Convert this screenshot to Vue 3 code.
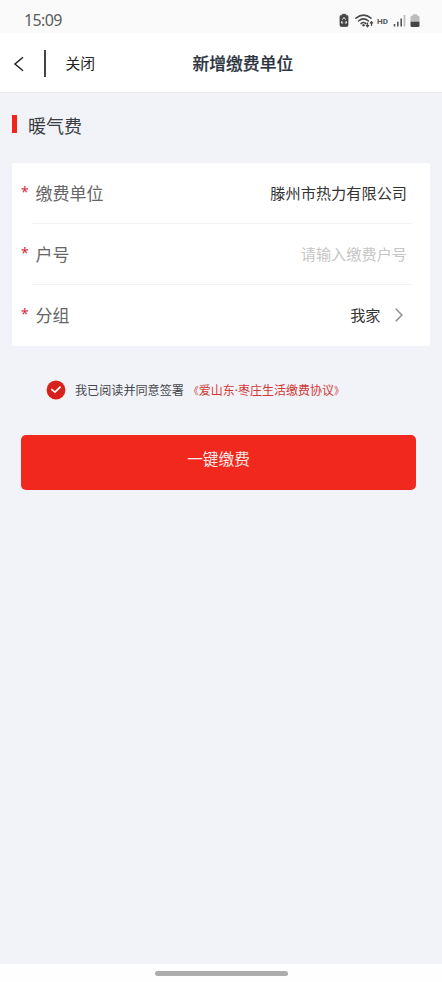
<script setup>
const rows = [
  { label: '缴费单位', value: '滕州市热力有限公司' },
  { label: '户号', placeholder: '请输入缴费户号' },
  { label: '分组', value: '我家', arrow: true },
]
</script>

<template>
  <div class="page">
    <div class="status">
      <span class="time">15:09</span>
      <svg class="status-icons" width="84" height="18" viewBox="0 0 84 18">
        <path d="M3.500 3.200h1V2.300h3v.9h1q1.500 0 1.500 1.500v8.300q0 1.500-1.500 1.500h-5q-1.500 0-1.500-1.500V4.700q0-1.500 1.500-1.500z" fill="#454545" stroke="#454545" stroke-width=".8" />
        <path d="M4.500 7.600 6 5.400l1.500 2.200M8 9l.6 2H6.800M5.200 11H3.400L4 9" fill="none" stroke="#eee" stroke-width="1" />
        <g fill="none" stroke="#4a4a4a" stroke-width="1.500" stroke-linecap="round">
          <path d="M18 6.200q7.500-6.200 15 0M20.500 9q5-4.200 10 0M23 11.600q2.500-2 5 0" />
        </g>
        <circle cx="25.500" cy="13.300" r="1.200" fill="#4a4a4a" />
        <path d="M29.500 10.500v4M28 13.200l1.500 1.600 1.500-1.600M33.500 14v-4M32 11.300l1.500-1.600 1.500 1.600" fill="none" stroke="#4a4a4a" stroke-width="1.200" />
        <text x="39" y="11.800" class="hd">HD</text>
        <path d="M56.500 12V14.500M59.800 9.800V14.500M63.200 6.500V14.500" stroke="#555" stroke-width="1.600" />
        <path d="M66.500 3V14.500" stroke="#bdbdbd" stroke-width="1.700" />
        <path d="M75 2.200h4v1.300h1q1.500 0 1.500 1.500v5h-9V5q0-1.500 1.500-1.500h1z" fill="#bdbdbd" />
        <path d="M72.500 9.700h9v3.800q0 1.500-1.500 1.500h-6q-1.500 0-1.500-1.500z" fill="#454545" />
      </svg>
    </div>
    <header class="nav">
      <svg class="back" width="12" height="18" viewBox="0 0 12 18">
        <path d="M10 2.200 2 9l8 6.800" fill="none" stroke="#222" stroke-width="1.500" />
      </svg>
      <i class="bar"></i>
      <span class="close">关闭</span>
      <h1>新增缴费单位</h1>
    </header>
    <main>
      <h2><i></i><span>暖气费</span></h2>
      <section class="card">
        <div v-for="row in rows" :key="row.label" class="row">
          <span class="star">*</span>
          <span class="label">{{ row.label }}</span>
          <span v-if="row.placeholder" class="value placeholder">{{ row.placeholder }}</span>
          <span v-else class="value">{{ row.value }}</span>
          <svg v-if="row.arrow" class="arrow" width="10" height="16" viewBox="0 0 10 16">
            <path d="M1.700 1.800 8 8l-6.300 6.200" fill="none" stroke="#8c8c8c" stroke-width="1.400" />
          </svg>
        </div>
      </section>
      <div class="agree">
        <svg width="20" height="20" viewBox="0 0 20 20">
          <circle cx="10" cy="10" r="9.400" fill="#d9211b" />
          <path d="M5.300 9.200 9 12.200l5.600-5.500" fill="none" stroke="#fff" stroke-width="1.700" />
        </svg>
        <span class="text">我已阅读并同意签署</span>
        <span class="link"><span class="mark open">《</span>爱山东·枣庄生活缴费协议<span class="mark">》</span></span>
      </div>
      <button class="pay">一键缴费</button>
    </main>
    <footer><i></i></footer>
  </div>
</template>

<style>
body {
  margin: 0;
}
</style>

<style scoped>
.page {
  width: 442px;
  height: 982px;
  display: flex;
  flex-direction: column;
  overflow: hidden;
  background: #f2f3f8;
  font-family: "Noto Sans", "Noto Sans CJK SC", sans-serif;
}
.status {
  height: 33px;
  flex: none;
  box-sizing: border-box;
  padding: 0 20px 0 24px;
  display: flex;
  justify-content: space-between;
  background: #fafafa;
}
.time {
  font-size: 16px;
  line-height: 41px;
  letter-spacing: -0.6px;
  color: #5c5c5c;
}
.status-icons {
  margin-top: 12px;
}
.hd {
  font: bold 8px Roboto, sans-serif;
  fill: #555;
}
.nav {
  height: 60px;
  flex: none;
  box-sizing: border-box;
  display: flex;
  align-items: center;
  padding: 1px 0 0 12.500px;
  background: #fff;
  border-bottom: 1px solid #ececef;
}
.bar {
  width: 1.500px;
  height: 27px;
  margin: 1px 20px 0 19.500px;
  background: #444;
}
.back {
  margin-top: 1px;
}
.close {
  width: 127px;
  font-size: 14.800px;
  line-height: 22px;
  color: #222;
}
h1 {
  margin: 0;
  font-size: 16.800px;
  line-height: 24px;
  font-weight: 500;
  font-family: "Noto Sans CJK SC", sans-serif;
  color: #2c3340;
  -webkit-text-stroke: 0.2px #2c3340;
}
main {
  flex: 1;
  display: flex;
  flex-direction: column;
}
h2 {
  display: flex;
  align-items: center;
  height: 28px;
  margin: 19px 0 23px 12px;
  font-size: 18px;
  font-weight: 400;
  line-height: 28px;
  color: #3a3c42;
}
h2 i {
  width: 4.500px;
  height: 18px;
  margin: -5px 11.500px 0 0;
  background: #f0261c;
}
.card {
  margin: 0 12px 0 12px;
  padding: 0 18px 0 9px;
  border-radius: 2px;
  background: #fff;
}
.row {
  height: 61px;
  box-sizing: border-box;
  display: flex;
  align-items: center;
  padding: 0 5px 0 0;
  background: linear-gradient(#f3f3f5, #f3f3f5) 11px 100% / 380px 1px no-repeat;
}
.row:last-child {
  background: none;
}
.star {
  width: 14.500px;
  margin-top: -3px;
  font-size: 14px;
  line-height: 20px;
  color: #d92a3a;
}
.label {
  flex: 1;
  font-size: 17px;
  line-height: 24px;
  color: #666;
}
.value {
  margin-top: -2px;
  font-size: 15.200px;
  line-height: 22px;
  color: #333;
}
.placeholder {
  color: #c6c6c6;
}
.arrow {
  margin: -2px 3.500px 0 13px;
}
.agree {
  display: flex;
  align-items: center;
  height: 20px;
  margin: 34px 0 0 46px;
  font-size: 12.100px;
  line-height: 20px;
  white-space: nowrap;
}
.text {
  margin: 1px 0 0 9px;
  color: #44474c;
}
.link {
  display: flex;
  margin: 1px 0 0 5px;
  font-size: 12px;
  color: #cf3a35;
}
.mark {
  width: 10px;
  font-size: 10px;
}
.open {
  display: flex;
  justify-content: flex-end;
}
.pay {
  height: 55px;
  margin: 35px 26px 0 21px;
  padding: 0 0 8px;
  border: 0;
  border-radius: 5px;
  background: #f0281e;
  color: #fdeae6;
  font-family: inherit;
  font-size: 15.700px;
  line-height: 24px;
}
footer {
  height: 18px;
  flex: none;
  display: flex;
  justify-content: center;
  background: #fefefe;
}
footer i {
  width: 133px;
  height: 5px;
  margin-top: 7px;
  border-radius: 3px;
  background: #adadad;
}
</style>
